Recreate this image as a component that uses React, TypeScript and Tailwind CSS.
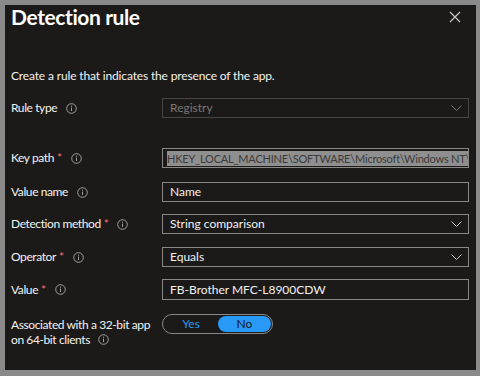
const font = { fontFamily: 'Lato, "Open Sans", sans-serif' };

const Info = () => (
  <svg width="11" height="11" viewBox="0 0 11 11" className="shrink-0">
    <circle cx="5.5" cy="5.5" r="4.8" fill="none" stroke="#a19f9d" strokeWidth="1" />
    <line x1="5.5" y1="4.6" x2="5.5" y2="8" stroke="#a19f9d" strokeWidth="1" />
    <circle cx="5.5" cy="3.2" r="0.6" fill="#a19f9d" />
  </svg>
);

const Chevron = ({ color }: { color: string }) => (
  <svg width="11" height="6" viewBox="0 0 11 6" className="shrink-0">
    <path d="M0.5 0.5 L5.5 5.5 L10.5 0.5" fill="none" stroke={color} strokeWidth="1" />
  </svg>
);

const Label = ({ text, required }: { text: string; required?: boolean }) => (
  <div className="w-[151px] shrink-0 flex items-center gap-[4px] text-[12px] tracking-[-0.4px] text-[#f3f2f1]">
    <span>{text}</span>
    {required && <span className="text-[#f1707b] -ml-[1px]">*</span>}
    <span className="ml-[5px] flex items-center">
      <Info />
    </span>
  </div>
);

const Row = ({ children, className }: { children: React.ReactNode; className?: string }) => (
  <div className={"flex items-center " + (className ?? "")}>{children}</div>
);

const App = () => {
  return (
    <div
      className="w-[480px] h-[376px] bg-[#8a8a8a] pt-[5px] pl-[5px] pr-[4px] pb-[6px]"
      style={font}
    >
      <div className="w-full h-full bg-[#1b1a19] pl-[6px] pr-[7px]">
        <div className="flex justify-between items-start">
          <h1 className="text-[21px] font-bold tracking-[-0.4px] text-white leading-[24px] mt-0">
            Detection rule
          </h1>
          <svg width="12" height="12" viewBox="0 0 12 12" className="mt-[6px] mr-[8px]">
            <path d="M1 1 L11 11 M11 1 L1 11" stroke="#c8c6c4" strokeWidth="1.2" fill="none" />
          </svg>
        </div>

        <p className="text-[12px] tracking-[-0.15px] text-[#f3f2f1] mt-[39px] leading-[16px]">
          Create a rule that indicates the presence of the app.
        </p>

        <Row className="mt-[14px]">
          <Label text="Rule type" />
          <div className="flex-1 h-[20px] border border-[#484644] flex items-center justify-between pl-[7px] pr-[6px]">
            <span className="text-[12px] text-[#797775]">Registry</span>
            <Chevron color="#797775" />
          </div>
        </Row>

        <Row className="mt-[30px]">
          <Label text="Key path" required />
          <div className="flex-1 h-[20px] border border-[#8a8886] flex items-center px-[4px] overflow-hidden">
            <span className="text-[11px] tracking-[-0.2px] text-[#3b3a39] bg-[#8f8f8f] whitespace-nowrap leading-[15px]">
              HKEY_LOCAL_MACHINE\SOFTWARE\Microsoft\Windows NT\
            </span>
          </div>
        </Row>

        <Row className="mt-[14px]">
          <Label text="Value name" />
          <div className="flex-1 h-[20px] border border-[#8a8886] flex items-center pl-[7px]">
            <span className="text-[12px] text-[#f3f2f1]">Name</span>
          </div>
        </Row>

        <Row className="mt-[12px]">
          <Label text="Detection method" required />
          <div className="flex-1 h-[20px] border border-[#8a8886] flex items-center justify-between pl-[7px] pr-[6px]">
            <span className="text-[12px] text-[#f3f2f1]">String comparison</span>
            <Chevron color="#c8c6c4" />
          </div>
        </Row>

        <Row className="mt-[13px]">
          <Label text="Operator" required />
          <div className="flex-1 h-[20px] border border-[#8a8886] flex items-center justify-between pl-[7px] pr-[6px]">
            <span className="text-[12px] text-[#f3f2f1]">Equals</span>
            <Chevron color="#c8c6c4" />
          </div>
        </Row>

        <Row className="mt-[12px]">
          <Label text="Value" required />
          <div className="flex-1 h-[21px] border border-[#8a8886] flex items-center pl-[7px]">
            <span className="text-[12px] text-[#f3f2f1]">FB-Brother MFC-L8900CDW</span>
          </div>
        </Row>

        <div className="flex items-start mt-[14px]">
          <div className="w-[151px] shrink-0 text-[12px] tracking-[-0.4px] text-[#f3f2f1] leading-[15px] pt-[3px]">
            <div className="whitespace-nowrap">Associated with a 32-bit app</div>
            <div className="flex items-center gap-[8px]">
              <span>on 64-bit clients</span>
              <Info />
            </div>
          </div>
          <div className="w-[111px] h-[20px] border border-[#8a8886] rounded-full flex items-center p-[1px]">
            <span className="flex-1 text-center text-[12px] text-[#2899f5] leading-[16px]">Yes</span>
            <span className="w-[53px] h-full rounded-full bg-[#2899f5] text-center text-[12px] text-[#1b1a19] leading-[16px]">
              No
            </span>
          </div>
        </div>
      </div>
    </div>
  );
};

export default App;
